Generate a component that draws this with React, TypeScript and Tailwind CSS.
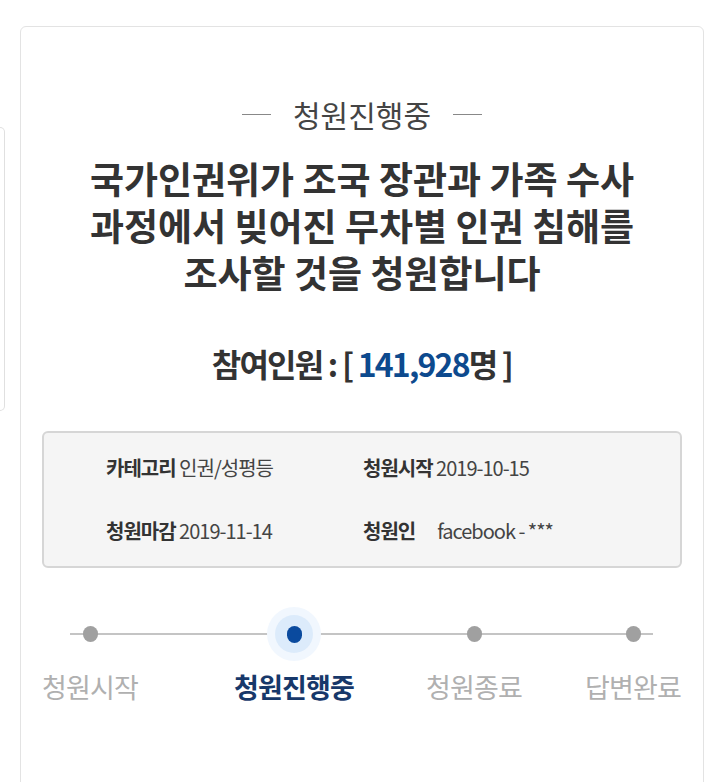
import React from "react";

const F = { fontFamily: '"Noto Sans CJK KR", "Noto Sans", sans-serif' };

const steps = [
  { label: "청원시작", active: false, ml: "ml-[4px]" },
  { label: "청원진행중", active: true, ml: "ml-[74px]" },
  { label: "청원종료", active: false, ml: "ml-[50px]" },
  { label: "답변완료", active: false, ml: "ml-[29px]" },
];

export default function App() {
  return (
    <div className="h-[782px] w-[720px] overflow-hidden bg-white flex" style={F}>
      <div className="mt-[127px] h-[284px] w-[5px] rounded-r-[5px] border border-l-0 border-[#e0e0e0]" />
      <div className="ml-[15px] mt-[26px] h-[800px] w-[684px] rounded-[6px] border border-[#e3e3e3] flex flex-col items-center">
        <div className="mt-[70px] flex items-center gap-[22px] text-[#444]">
          <span className="block h-px w-[29px] bg-[#888]" />
          <span className="text-[30px] leading-[34px]">청원진행중</span>
          <span className="block h-px w-[29px] bg-[#888]" />
        </div>
        <h1 className="mt-[24px] flex flex-col items-center text-center text-[37px] leading-[47px] font-bold text-[#333]">
          <span className="block h-[47px]">국가인권위가 조국 장관과 가족 수사</span>
          <span className="block h-[47px]">과정에서 빚어진 무차별 인권 침해를</span>
          <span className="block h-[47px]">조사할 것을 청원합니다</span>
        </h1>
        <div className="mt-[47px] text-[32px] leading-[40px] font-bold tracking-[-1.8px] text-[#333]">
          참여인원 : [ <span className="text-[#0d4a8e]">141,928</span>명 ]
        </div>
        <div className="mt-[48px] h-[137px] w-[640px] rounded-[6px] border-2 border-[#d6d6d6] bg-[#f5f5f5] grid grid-cols-[257px_1fr] content-between pt-[19px] pb-[19px] pl-[62px] text-[20px] leading-[32px] tracking-[-1px] text-[#444]">
          <div><span className="font-bold text-[#333]">카테고리</span> 인권/성평등</div>
          <div><span className="font-bold text-[#333]">청원시작</span> 2019-10-15</div>
          <div><span className="font-bold text-[#333]">청원마감</span> 2019-11-14</div>
          <div><span className="font-bold text-[#333]">청원인</span><span className="ml-[22px]">facebook - ***</span></div>
        </div>
        <div className="relative mt-[33px] w-[682px] self-start">
          <div className="absolute left-[49px] top-[32px] h-[2px] w-[583px] bg-[#c4c4c4]" />
          <div className="relative flex">
            {steps.map((s) => (
              <div key={s.label} className={`${s.ml} flex w-[130px] flex-col items-center`}>
                <div className="flex h-[66px] w-[66px] items-center justify-center">
                  {s.active ? (
                    <div className="flex h-[54px] w-[54px] items-center justify-center rounded-full bg-[#f1f7fe]">
                      <div className="flex h-[38px] w-[38px] items-center justify-center rounded-full bg-[#dcebfb]">
                        <div className="h-[17px] w-[15px] rounded-full bg-[#0a4a9e]" />
                      </div>
                    </div>
                  ) : (
                    <div className="h-[16px] w-[15px] rounded-full bg-[#a0a0a0]" />
                  )}
                </div>
                <div
                  className={
                    s.active
                      ? "mt-[2px] text-[27px] leading-[36px] font-bold tracking-[-0.8px] text-[#17386a]"
                      : "mt-[2px] text-[27px] leading-[36px] tracking-[-0.8px] text-[#b0b0b0]"
                  }
                >
                  {s.label}
                </div>
              </div>
            ))}
          </div>
        </div>
      </div>
    </div>
  );
}
